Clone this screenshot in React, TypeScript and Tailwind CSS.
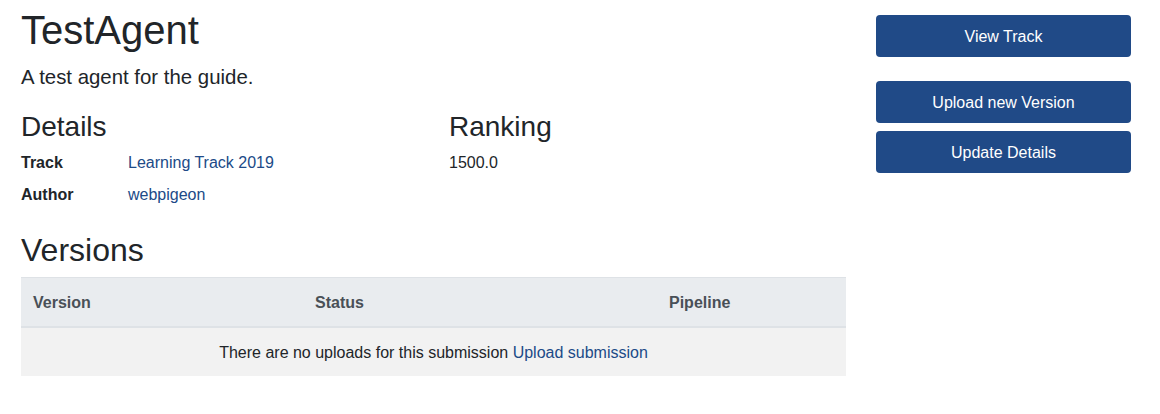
export default function App() {
  return (
    <div className="flex items-start pl-[21px] font-['Liberation_Sans',Arial,sans-serif] text-[#212529] bg-white min-h-[414px]">
      <main className="w-[825px] pt-[6px]">
        <h1 className="text-[40px] leading-[48px] mb-[8px] font-normal">TestAgent</h1>
        <p className="text-[20.4px] leading-[30px] mb-[17px]">A test agent for the guide.</p>
        <div className="flex">
          <section className="w-[428px] pt-[1px]">
            <h3 className="text-[28px] leading-[33.6px] mb-[7px] font-normal">Details</h3>
            <div className="space-y-2 text-[16px] leading-6">
              <div className="flex">
                <span className="w-[107px] font-bold">Track</span>
                <a className="text-[#204a87]" href="#">Learning Track 2019</a>
              </div>
              <div className="flex">
                <span className="w-[107px] font-bold">Author</span>
                <a className="text-[#204a87]" href="#">webpigeon</a>
              </div>
            </div>
          </section>
          <section className="flex-1 pt-[1px]">
            <h3 className="text-[28px] leading-[33.6px] mb-[7px] font-normal">Ranking</h3>
            <div className="text-[16px] leading-6">1500.0</div>
          </section>
        </div>
        <h2 className="text-[32px] leading-[38.4px] mt-[24px] mb-2 font-normal">Versions</h2>
        <table className="w-[825px] border-collapse text-[16px] leading-6 table-fixed">
          <colgroup>
            <col className="w-[282px]" />
            <col className="w-[354px]" />
            <col className="w-[189px]" />
          </colgroup>
          <thead>
            <tr className="bg-[#e9ecef] text-[#495057]">
              <th className="px-3 pt-[13px] pb-[11px] text-left font-bold border-t border-[#dee2e6] border-b-2">Version</th>
              <th className="px-3 pt-[13px] pb-[11px] text-left font-bold border-t border-[#dee2e6] border-b-2">Status</th>
              <th className="px-3 pt-[13px] pb-[11px] text-left font-bold border-t border-[#dee2e6] border-b-2">Pipeline</th>
            </tr>
          </thead>
          <tbody>
            <tr className="bg-[#f2f2f2]">
              <td colSpan={3} className="px-3 pt-[13px] pb-[11px] text-center">
                There are no uploads for this submission{" "}
                <a className="text-[#204a87]" href="#">Upload submission</a>
              </td>
            </tr>
          </tbody>
        </table>
      </main>
      <aside className="ml-[30px] w-[255px] pt-[15px] flex flex-col">
        <button className="h-[42px] pt-[2px] rounded bg-[#204a87] text-white text-[16px]">View Track</button>
        <button className="mt-[24px] h-[42px] pt-[2px] rounded bg-[#204a87] text-white text-[16px]">Upload new Version</button>
        <button className="mt-[8px] h-[42px] pt-[2px] rounded bg-[#204a87] text-white text-[16px]">Update Details</button>
      </aside>
    </div>
  );
}
